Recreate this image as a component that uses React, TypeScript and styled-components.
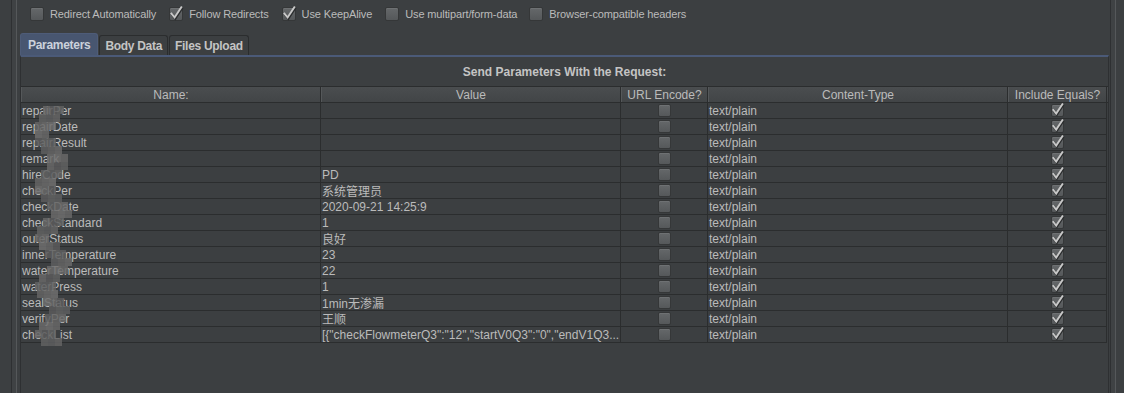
import React from 'react';
import styled, { createGlobalStyle } from 'styled-components';

const GlobalStyle = createGlobalStyle`
  html, body {
    margin: 0;
    padding: 0;
    background: #3c3f41;
  }
  body {
    font-family: "Liberation Sans", "Noto Sans CJK SC", sans-serif;
    color: #bbbbbb;
  }
`;

const Page = styled.div`
  display: flex;
  width: 1124px;
  height: 393px;
  overflow: hidden;
  background: #3c3f41;
`;

const Spacer = styled.div<{ $w: number }>`
  width: ${(p) => p.$w}px;
  flex-shrink: 0;
`;

const Rail = styled.div`
  width: 4px;
  flex-shrink: 0;
  border-left: 1px solid #2e3032;
  border-right: 1px solid #55585a;
  background: #3f4244;
`;

const Main = styled.div`
  width: 1093px;
  flex-shrink: 0;
  display: flex;
  flex-direction: column;
`;

const OptionsRow = styled.div`
  display: flex;
  align-items: center;
  height: 27px;
  padding-left: 13px;
  margin-bottom: 6px;
`;

const Option = styled.label<{ $gap: number }>`
  display: flex;
  align-items: center;
  gap: 6px;
  margin-right: ${(p) => p.$gap}px;
  font-size: 11px;
  letter-spacing: -0.12px;
  color: #bbbbbb;
  white-space: nowrap;
`;

const Box = styled.span<{ $size: number }>`
  display: inline-flex;
  align-items: center;
  justify-content: center;
  width: ${(p) => p.$size}px;
  height: ${(p) => p.$size}px;
  box-sizing: border-box;
  border: 1px solid #353738;
  border-radius: 2px;
  background: linear-gradient(#65686a, #55585a);
  box-shadow: inset 0 1px 0 #6e7173;
  overflow: visible;
`;

const Check = ({ size, checked }: { size: number; checked: boolean }) => (
  <Box $size={size}>
    {checked && (
      <svg width={size} height={size} viewBox="0 0 12 12" style={{ overflow: 'visible', marginTop: -2 }}>
        <path d="M1.6 5.8 L4.8 9.8 L11 0.4" fill="none" stroke="#2b2d2e" strokeWidth="2.2" transform="translate(0.6 0.8)" />
        <path d="M1.6 5.8 L4.8 9.8 L11 0.4" fill="none" stroke="#c8c8c8" strokeWidth="1.7" />
      </svg>
    )}
  </Box>
);

const TabStrip = styled.div`
  display: flex;
  align-items: flex-end;
  height: 22px;
  margin-left: 3px;
`;

const Tab = styled.div<{ $active?: boolean }>`
  height: ${(p) => (p.$active ? 22 : 20)}px;
  box-sizing: border-box;
  padding: 0 ${(p) => (p.$active ? 7 : 5)}px;
  display: flex;
  align-items: center;
  font-size: 12px;
  font-weight: bold;
  letter-spacing: -0.3px;
  color: ${(p) => (p.$active ? '#ccd2dc' : '#c4c4c4')};
  background: ${(p) => (p.$active ? '#485670' : '#3c3f41')};
  border: 1px solid ${(p) => (p.$active ? '#4e5c78' : '#2b2d2e')};
  border-bottom: none;
  border-radius: 3px 3px 0 0;
  margin-right: 1px;
`;

const Pane = styled.div`
  flex: 1;
  margin-left: 3px;
  width: 1089px;
  box-sizing: border-box;
  border-top: 2px solid #4b5a78;
  border-left: 1px solid #2e3032;
  border-right: 1px solid #2e3032;
  display: flex;
  flex-direction: column;
`;

const Title = styled.div`
  height: 29px;
  display: flex;
  align-items: center;
  justify-content: center;
  font-size: 12px;
  font-weight: bold;
  color: #c4c4c4;
`;

const Table = styled.div`
  width: 1087px;
  position: relative;
`;

const COLS = '300px 300px 87px 300px 99px';

const HeadRow = styled.div`
  display: grid;
  grid-template-columns: ${COLS};
  height: 17px;
  background: linear-gradient(#4a4d4f, #424547);
  border-top: 1px solid #2b2d2e;
  border-bottom: 1px solid #2b2d2e;
  box-sizing: border-box;
`;

const HeadCell = styled.div`
  display: flex;
  align-items: center;
  justify-content: center;
  font-size: 12px;
  color: #bbbbbb;
  border-right: 1px solid #2b2d2e;
  border-left: 1px solid #55585a;
  white-space: nowrap;
  overflow: hidden;
`;

const Row = styled.div`
  display: grid;
  grid-template-columns: ${COLS};
  height: 16px;
`;

const Cell = styled.div<{ $center?: boolean }>`
  display: flex;
  align-items: center;
  justify-content: ${(p) => (p.$center ? 'center' : 'flex-start')};
  box-sizing: border-box;
  padding-left: 1px;
  font-size: 12px;
  color: #bbbbbb;
  border-right: 1px solid #2b2d2e;
  border-bottom: 1px solid #2b2d2e;
  white-space: nowrap;
  overflow: hidden;
`;

const Mosaic = styled.svg`
  position: absolute;
  left: 8px;
  top: 20px;
  pointer-events: none;
`;

const rows: [string, string][] = [
  ['repairPer', ''],
  ['repairDate', ''],
  ['repairResult', ''],
  ['remark', ''],
  ['hireCode', 'PD'],
  ['checkPer', '系统管理员'],
  ['checkDate', '2020-09-21 14:25:9'],
  ['checkStandard', '1'],
  ['outerStatus', '良好'],
  ['innerTemperature', '23'],
  ['waterTemperature', '22'],
  ['waterPress', '1'],
  ['sealStatus', '1min无渗漏'],
  ['verifyPer', '王顺'],
  ['checkList', '[{"checkFlowmeterQ3":"12","startV0Q3":"0","endV1Q3...'],
];

// pixelated smudge over the names: per band of 8px, the left block and how many blocks wide
const bands: [number, number][] = [
  [14, 3], [10, 3], [6, 3], [6, 2], [6, 3], [12, 3], [18, 3], [18, 3],
  [12, 3], [6, 3], [6, 3], [12, 3], [18, 3], [22, 3], [14, 3], [8, 3],
  [6, 2], [10, 3], [16, 3], [22, 3], [18, 3], [10, 3], [6, 3], [8, 3],
  [14, 3], [20, 3], [16, 3], [10, 3], [6, 3], [12, 3],
];
const shades = ['#676767', '#5d5e5f', '#6e6e6e', '#606162', '#6a6a6a', '#5a5b5c', '#646464'];

export default function App() {
  return (
    <Page>
      <GlobalStyle />
      <Spacer $w={11} />
      <Rail />
      <Main>
        <OptionsRow>
          <Option $gap={13}>
            <Check size={14} checked={false} />
            Redirect Automatically
          </Option>
          <Option $gap={13}>
            <Check size={14} checked />
            Follow Redirects
          </Option>
          <Option $gap={13}>
            <Check size={14} checked />
            Use KeepAlive
          </Option>
          <Option $gap={12}>
            <Check size={14} checked={false} />
            Use multipart/form-data
          </Option>
          <Option $gap={0}>
            <Check size={14} checked={false} />
            Browser-compatible headers
          </Option>
        </OptionsRow>
        <TabStrip>
          <Tab $active>Parameters</Tab>
          <Tab>Body Data</Tab>
          <Tab>Files Upload</Tab>
        </TabStrip>
        <Pane>
          <Title>Send Parameters With the Request:</Title>
          <Table>
            <HeadRow>
              <HeadCell>Name:</HeadCell>
              <HeadCell>Value</HeadCell>
              <HeadCell>URL Encode?</HeadCell>
              <HeadCell>Content-Type</HeadCell>
              <HeadCell>Include Equals?</HeadCell>
            </HeadRow>
            {rows.map(([name, value]) => (
              <Row key={name}>
                <Cell>{name}</Cell>
                <Cell>{value}</Cell>
                <Cell $center>
                  <Check size={13} checked={false} />
                </Cell>
                <Cell>text/plain</Cell>
                <Cell $center>
                  <Check size={13} checked />
                </Cell>
              </Row>
            ))}
            <Mosaic width="52" height="240">
              {bands.flatMap(([x, n], i) =>
                Array.from({ length: n }, (_, j) => (
                  <rect
                    key={`${i}-${j}`}
                    x={x + j * 7}
                    y={i * 8}
                    width="7"
                    height="8"
                    fill={shades[(i * 3 + j * 5) % shades.length]}
                    opacity="0.85"
                  />
                ))
              )}
            </Mosaic>
          </Table>
        </Pane>
      </Main>
      <Rail />
      <Spacer $w={8} />
    </Page>
  );
}
